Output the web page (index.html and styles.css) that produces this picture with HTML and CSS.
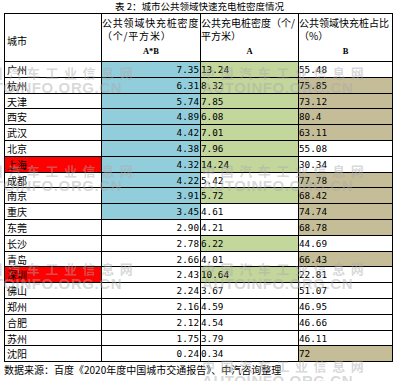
FILE: index.html
```html
<!DOCTYPE html>
<html lang="zh">
<head>
<meta charset="utf-8">
<link rel="stylesheet" href="styles.css">
</head>
<body>
<div class="page">
  <div class="title">表 2：城市公共领域快速充电桩密度情况</div>
  <div class="grid">
    <div class="hd hd-city">城市</div>
    <div class="hd"><div class="hd-text sp">公共领域快充桩密度（个/平方米）</div><div class="lbl">A*B</div></div>
    <div class="hd"><div class="hd-text">公共充电桩密度（个/平方米）</div><div class="lbl">A</div></div>
    <div class="hd"><div class="hd-text">公共领域快充桩占比（%）</div><div class="lbl">B</div></div>

    <div class="c city">广州</div><div class="c n r blue">7.35</div><div class="c n green">13.24</div><div class="c n">55.48</div>
    <div class="c city">杭州</div><div class="c n r blue">6.31</div><div class="c n green">8.32</div><div class="c n tan">75.85</div>
    <div class="c city">天津</div><div class="c n r blue">5.74</div><div class="c n green">7.85</div><div class="c n tan">73.12</div>
    <div class="c city">西安</div><div class="c n r blue">4.89</div><div class="c n green">6.08</div><div class="c n tan">80.4</div>
    <div class="c city">武汉</div><div class="c n r blue">4.42</div><div class="c n green">7.01</div><div class="c n tan">63.11</div>
    <div class="c city">北京</div><div class="c n r blue">4.38</div><div class="c n green">7.96</div><div class="c n">55.08</div>
    <div class="c city red">上海</div><div class="c n r blue">4.32</div><div class="c n green">14.24</div><div class="c n">30.34</div>
    <div class="c city">成都</div><div class="c n r blue">4.22</div><div class="c n">5.42</div><div class="c n tan">77.78</div>
    <div class="c city">南京</div><div class="c n r blue">3.91</div><div class="c n green">5.72</div><div class="c n tan">68.42</div>
    <div class="c city">重庆</div><div class="c n r blue">3.45</div><div class="c n">4.61</div><div class="c n tan">74.74</div>
    <div class="c city">东莞</div><div class="c n r">2.90</div><div class="c n">4.21</div><div class="c n tan">68.78</div>
    <div class="c city">长沙</div><div class="c n r">2.78</div><div class="c n green">6.22</div><div class="c n">44.69</div>
    <div class="c city">青岛</div><div class="c n r">2.66</div><div class="c n">4.01</div><div class="c n tan">66.43</div>
    <div class="c city red">深圳</div><div class="c n r">2.43</div><div class="c n green">10.64</div><div class="c n">22.81</div>
    <div class="c city">佛山</div><div class="c n r">2.24</div><div class="c n">3.67</div><div class="c n">51.07</div>
    <div class="c city">郑州</div><div class="c n r">2.16</div><div class="c n">4.59</div><div class="c n">46.95</div>
    <div class="c city">合肥</div><div class="c n r">2.12</div><div class="c n">4.54</div><div class="c n">46.66</div>
    <div class="c city">苏州</div><div class="c n r">1.75</div><div class="c n">3.79</div><div class="c n">46.11</div>
    <div class="c city">沈阳</div><div class="c n r">0.24</div><div class="c n">0.34</div><div class="c n tan">72</div>
  </div>
  <div class="source">数据来源：百度《2020年度中国城市交通报告》、中汽咨询整理</div>

  <div class="wm wm-l wm-1"><div class="wm-cn">中国汽车工业信息网</div><div class="wm-en">AUTOINFO.ORG.CN</div></div>
  <div class="wm wm-r wm-1"><div class="wm-cn">中国汽车工业信息网</div><div class="wm-en">AUTOINFO.ORG.CN</div></div>
  <div class="wm wm-l wm-2"><div class="wm-cn">中国汽车工业信息网</div><div class="wm-en">AUTOINFO.ORG.CN</div></div>
  <div class="wm wm-r wm-2"><div class="wm-cn">中国汽车工业信息网</div><div class="wm-en">AUTOINFO.ORG.CN</div></div>
  <div class="wm wm-l wm-3"><div class="wm-cn">中国汽车工业信息网</div><div class="wm-en">AUTOINFO.ORG.CN</div></div>
  <div class="wm wm-r wm-3"><div class="wm-cn">中国汽车工业信息网</div><div class="wm-en">AUTOINFO.ORG.CN</div></div>
  <div class="wm wm-r wm-4"><div class="wm-cn">中国汽车工业信息网</div><div class="wm-en">AUTOINFO.ORG.CN</div></div>
</div>
</body>
</html>
```

FILE: styles.css
```css
html, body {
  margin: 0;
  padding: 0;
  background: #fff;
}
.page {
  position: relative;
  width: 397px;
  height: 381px;
  overflow: hidden;
  font-family: "Noto Sans CJK SC", "Noto Sans", sans-serif;
  color: #000;
}
.title {
  height: 13px;
  line-height: 13px;
  font-size: 9.5px;
  text-align: center;
  padding-left: 2px;
}
.grid {
  margin-left: 4px;
  width: 389px;
  box-sizing: border-box;
  display: grid;
  grid-template-columns: 96px 98px 97px 93px;
  grid-template-rows: 47px;
  grid-auto-rows: 14.8px;
  gap: 1px;
  padding: 1px;
  background: #000;
}
.hd {
  background: #fff;
  font-size: 10px;
  line-height: 13px;
  padding-top: 2px;
  box-sizing: border-box;
}
.hd-city {
  padding: 0 0 0 2px;
  display: flex;
  align-items: center;
  padding-top: 5px;
}
.hd-text {
  height: 26px;
}
.sp {
  letter-spacing: 0.8px;
}
.lbl {
  margin-top: 3px;
  text-align: center;
  font-family: "Liberation Serif", serif;
  font-weight: bold;
  font-size: 8.5px;
  line-height: 13px;
}
.c {
  background: #fff;
  font-size: 10px;
  line-height: 15px;
  white-space: nowrap;
  overflow: hidden;
}
.city {
  padding-left: 2px;
}
.n {
  font-family: "DejaVu Sans Mono", monospace;
  font-size: 9.3px;
  padding-top: 1px;
  line-height: 14px;
}
.r {
  text-align: right;
  padding-right: 1px;
}
.blue { background: #92cddc; }
.green { background: #c3d69b; }
.tan { background: #c4bd97; }
.red { background: #ff0000; }
.source {
  padding-left: 4px;
  height: 18px;
  line-height: 15px;
  font-size: 10px;
}
.wm {
  position: absolute;
  width: 160px;
  pointer-events: none;
  color: rgba(170, 170, 170, 0.45);
  white-space: nowrap;
}
.wm-cn {
  font-size: 13px;
  font-weight: bold;
  letter-spacing: 5.6px;
  line-height: 15px;
}
.wm-en {
  font-family: "Liberation Sans", sans-serif;
  font-size: 15px;
  font-weight: bold;
  letter-spacing: 0.6px;
  line-height: 15px;
}
.wm-l { left: -29px; }
.wm-r { left: 202px; }
.wm-1 { top: 65px; }
.wm-2 { top: 163px; }
.wm-3 { top: 261px; }
.wm-4 { top: 358px; }
```
